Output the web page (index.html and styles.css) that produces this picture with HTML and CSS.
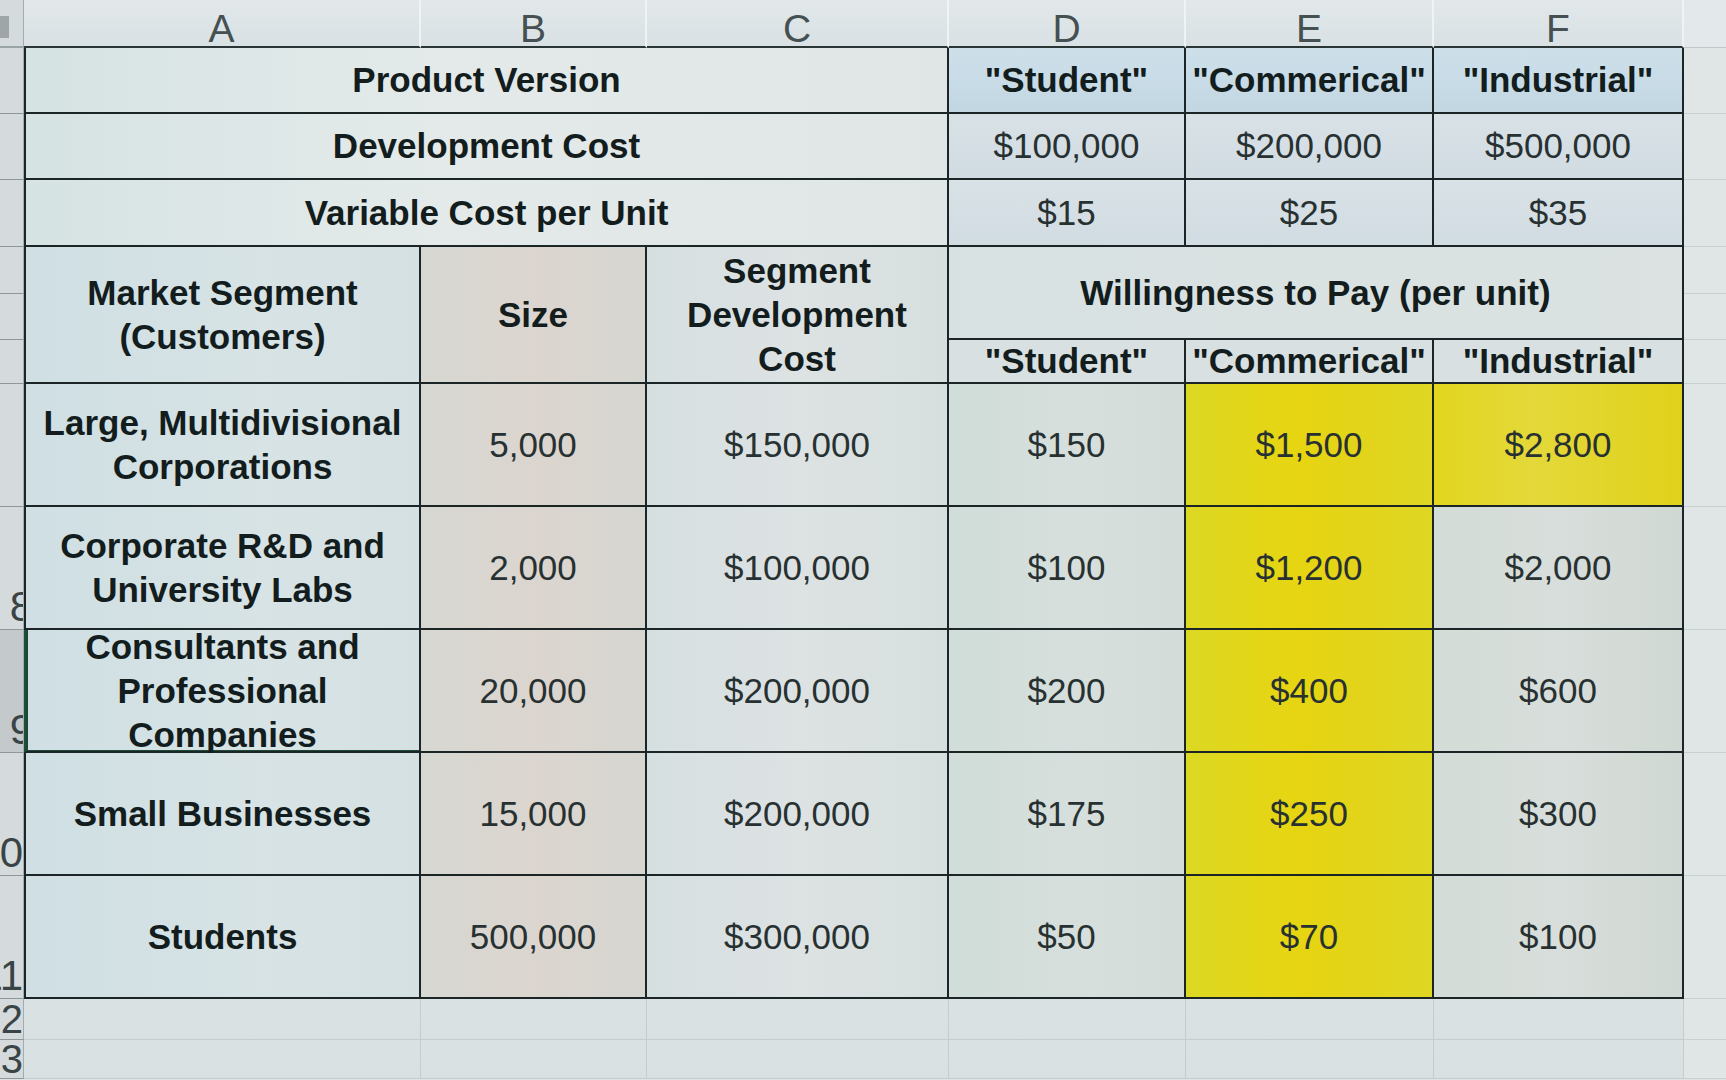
FILE: index.html
```html
<!DOCTYPE html>
<html>
<head>
<meta charset="utf-8">
<title>Market Segments</title>
<link rel="stylesheet" href="styles.css">
</head>
<body>
<div class="sheet">
  <!-- column header row -->
  <div class="g corner"><span class="sel"></span></div>
  <div class="ch">A</div>
  <div class="ch">B</div>
  <div class="ch">C</div>
  <div class="ch">D</div>
  <div class="ch">E</div>
  <div class="ch">F</div>
  <div class="x xh"></div>

  <!-- row 1 -->
  <div class="g"></div>
  <div class="c lab s3 lb top-abc">Product Version</div>
  <div class="c lab ver">"Student"</div>
  <div class="c lab ver">"Commerical"</div>
  <div class="c lab ver">"Industrial"</div>
  <div class="x"></div>

  <!-- row 2 -->
  <div class="g"></div>
  <div class="c lab s3 lb top-abc">Development Cost</div>
  <div class="c num cost">$100,000</div>
  <div class="c num cost">$200,000</div>
  <div class="c num cost">$500,000</div>
  <div class="x"></div>

  <!-- row 3 -->
  <div class="g"></div>
  <div class="c lab s3 lb top-abc">Variable Cost per Unit</div>
  <div class="c num cost">$15</div>
  <div class="c num cost">$25</div>
  <div class="c num cost">$35</div>
  <div class="x"></div>

  <!-- rows 4-6 (headers) -->
  <div class="g"></div>
  <div class="c lab r3 lb col-a">Market Segment<br>(Customers)</div>
  <div class="c lab r3 col-b">Size</div>
  <div class="c lab r3 col-c">Segment<br>Development<br>Cost</div>
  <div class="c lab s3 r2 wtp">Willingness to Pay (per unit)</div>
  <div class="x"></div>

  <div class="g"></div>
  <div class="x"></div>

  <div class="g"></div>
  <div class="c lab sub">"Student"</div>
  <div class="c lab sub">"Commerical"</div>
  <div class="c lab sub">"Industrial"</div>
  <div class="x"></div>

  <!-- row 7 -->
  <div class="g"></div>
  <div class="c lab lb col-a">Large, Multidivisional<br>Corporations</div>
  <div class="c num col-b">5,000</div>
  <div class="c num col-c">$150,000</div>
  <div class="c num col-d">$150</div>
  <div class="c num yel">$1,500</div>
  <div class="c num yel2">$2,800</div>
  <div class="x"></div>

  <!-- row 8 -->
  <div class="g"><span class="rn part">8</span></div>
  <div class="c lab lb col-a">Corporate R&amp;D and<br>University Labs</div>
  <div class="c num col-b">2,000</div>
  <div class="c num col-c">$100,000</div>
  <div class="c num col-d">$100</div>
  <div class="c num yel">$1,200</div>
  <div class="c num col-f">$2,000</div>
  <div class="x"></div>

  <!-- row 9 -->
  <div class="g gsel"><span class="rn part">9</span></div>
  <div class="c lab lb col-a active">Consultants and<br>Professional<br>Companies</div>
  <div class="c num col-b">20,000</div>
  <div class="c num col-c">$200,000</div>
  <div class="c num col-d">$200</div>
  <div class="c num yel">$400</div>
  <div class="c num col-f">$600</div>
  <div class="x"></div>

  <!-- row 10 -->
  <div class="g"><span class="rn">10</span></div>
  <div class="c lab lb col-a">Small Businesses</div>
  <div class="c num col-b">15,000</div>
  <div class="c num col-c">$200,000</div>
  <div class="c num col-d">$175</div>
  <div class="c num yel">$250</div>
  <div class="c num col-f">$300</div>
  <div class="x"></div>

  <!-- row 11 -->
  <div class="g"><span class="rn">11</span></div>
  <div class="c lab lb col-a">Students</div>
  <div class="c num col-b">500,000</div>
  <div class="c num col-c">$300,000</div>
  <div class="c num col-d">$50</div>
  <div class="c num yel">$70</div>
  <div class="c num col-f">$100</div>
  <div class="x"></div>

  <!-- row 12 -->
  <div class="g gmid"><span class="rn">12</span></div>
  <div class="e"></div><div class="e"></div><div class="e"></div>
  <div class="e"></div><div class="e"></div><div class="e"></div>
  <div class="x"></div>

  <!-- row 13 -->
  <div class="g gmid"><span class="rn">13</span></div>
  <div class="e"></div><div class="e"></div><div class="e"></div>
  <div class="e"></div><div class="e"></div><div class="e"></div>
  <div class="x"></div>
</div>
</body>
</html>
```

FILE: styles.css
```css
html, body {
  margin: 0;
  padding: 0;
  width: 1726px;
  height: 1080px;
  overflow: hidden;
  background: #dde3e5;
}

.sheet {
  display: grid;
  grid-template-columns: 24px 397px 226px 302px 237px 248px 250px 1fr;
  grid-template-rows: 48px 66px 66px 67px 47px 46px 44px repeat(5, 123px) 41px 39px;
  width: 1726px;
  height: 1080px;
  font-family: "Liberation Sans", Arial, sans-serif;
  background: linear-gradient(180deg, #dfe6e8 0%, #dbe2e3 60%, #dde3e4 100%);
}

/* row-number gutter */
.g {
  grid-column: 1;
  background: #d5dbdc;
  border-bottom: 1px solid #8e9899;
  border-right: 1px solid #a3acae;
  display: flex;
  justify-content: flex-end;
  align-items: flex-end;
  overflow: hidden;
  box-sizing: border-box;
}
.corner {
  border-bottom: 2px solid #9aa3a5;
  align-items: flex-start;
  justify-content: flex-start;
}
.sel {
  display: block;
  width: 9px;
  height: 22px;
  margin-top: 16px;
  background: #9ea6a8;
}
.gsel { background: #c4cacb; }
.gmid { align-items: center; }
.rn {
  font-size: 42px;
  line-height: 40px;
  color: #3a4446;
  white-space: nowrap;
  padding-bottom: 2px;
}
.gmid .rn {
  padding-bottom: 0;
  font-size: 40px;
  line-height: 34px;
}
.part { margin-right: -10px; }

/* column letter headers */
.ch {
  display: flex;
  justify-content: center;
  align-items: center;
  padding-top: 12px;
  box-sizing: border-box;
  font-size: 39px;
  line-height: 36px;
  color: #455052;
  background: linear-gradient(180deg, #e2e8ea, #d9e1e4);
  border-right: 2px solid #eef3f4;
  border-bottom: 2px solid #2a3535;
}

/* area right of the table */
.x {
  grid-column: 8;
  background: #e0e5e6;
  border-bottom: 1px solid #c9d0d2;
  box-sizing: border-box;
}
.xh { background: #e3e8ea; border-bottom: 1px solid #bfc7c9; }

/* table cells */
.c {
  display: flex;
  align-items: center;
  justify-content: center;
  text-align: center;
  box-sizing: border-box;
  border-right: 2px solid #1b2525;
  border-bottom: 2px solid #1b2525;
  font-size: 35px;
  line-height: 44px;
  color: #283131;
  white-space: nowrap;
  min-height: 0;
}
.lab { font-weight: bold; color: #131d1d; }
.num { font-weight: normal; }
.lb { border-left: 2px solid #1b2525; }

.s3 { grid-column: span 3; }
.r3 { grid-row: span 3; }
.r2 { grid-row: span 2; }

.top-abc { background: linear-gradient(90deg, #d6e3e3 0%, #e4eaea 45%, #dfe6e5 100%); }
.ver { background: linear-gradient(180deg, #cde0ea, #c3d7e3); }
.cost { background: linear-gradient(180deg, #d8e1e6, #d1dce2); }
.wtp { background: linear-gradient(90deg, #d8e1e2, #dbe2e1); }
.sub { background: #d8e0e1; }

.col-a { background: linear-gradient(90deg, #cfdfe3 0%, #d7e3e5 60%, #d4e0e2 100%); }
.col-b { background: linear-gradient(90deg, #d7d7d2 0%, #dcd5cf 55%, #d6d6d1 100%); }
.col-c { background: linear-gradient(90deg, #d6dfe0 0%, #dde2e3 50%, #d7dfde 100%); }
.col-d { background: linear-gradient(90deg, #d0ddd8 0%, #d7dfdd 60%, #d3dcd9 100%); }
.col-f { background: linear-gradient(90deg, #d3dcd7 0%, #d8dedb 50%, #d0d8d3 100%); }
.yel { background: linear-gradient(90deg, #dcd823 0%, #e7d511 45%, #e3d41a 70%, #dfd724 100%); }
.yel2 { background: linear-gradient(90deg, #e2d61e 0%, #e4d83a 40%, #e0d21a 100%); }

.active {
  box-shadow: inset 2px 0 0 #1b4b37, inset 0 -1px 0 #1b4b37;
  border-left-color: #1d5039;
}

/* empty rows below */
.e {
  border-right: 1px solid #c4ccce;
  border-bottom: 1px solid #c4ccce;
  box-sizing: border-box;
  background: linear-gradient(180deg, #dbe2e3, #d9e0e2);
}
```
